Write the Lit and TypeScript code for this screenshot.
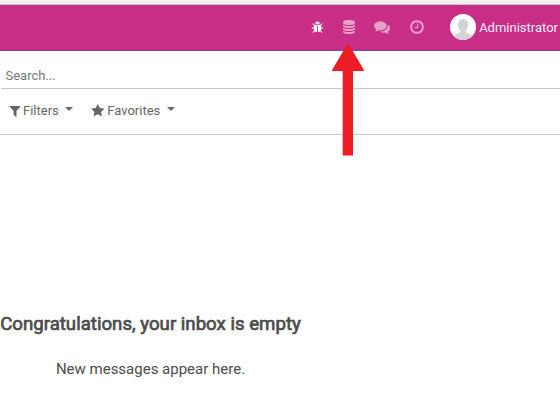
import { LitElement, html, css, svg } from "lit";
import { customElement } from "lit/decorators.js";

const paths = {
  bug: "M1696 960q0 26-19 45t-45 19h-224q0 171-67 290l208 209q19 19 19 45t-19 45q-18 19-45 19t-45-19l-198-197q-5 5-15 13t-42 28.5-65 36.5-82 29-97 13v-896h-128v896q-51 0-101.5-13.5t-87-33-66-39-43.5-32.5l-15-14-183 207q-20 21-48 21-24 0-43-16-19-18-20.5-44.5t15.5-46.5l202-227q-58-114-58-274h-224q-26 0-45-19t-19-45 19-45 45-19h224v-294l-173-173q-19-19-19-45t19-45 45-19 45 19l173 173h844l173-173q19-19 45-19t45 19 19 45-19 45l-173 173v294h224q26 0 45 19t19 45zm-480-576h-640q0-133 93.5-226.5t226.5-93.5 226.5 93.5 93.5 226.5z",
  database: "M896 768q237 0 443-43t325-127v170q0 69-103 128t-280 93.5-385 34.5-385-34.5-280-93.5-103-128v-170q119 84 325 127t443 43zm0 768q237 0 443-43t325-127v170q0 69-103 128t-280 93.5-385 34.5-385-34.5-280-93.5-103-128v-170q119 84 325 127t443 43zm0-384q237 0 443-43t325-127v170q0 69-103 128t-280 93.5-385 34.5-385-34.5-280-93.5-103-128v-170q119 84 325 127t443 43zm0-1152q208 0 385 34.5t280 93.5 103 128v128q0 69-103 128t-280 93.5-385 34.5-385-34.5-280-93.5-103-128v-128q0-69 103-128t280-93.5 385-34.5z",
  comments: "M1408 768q0 139-94 257t-256.5 186.5-353.5 68.5q-86 0-176-16-124 88-278 128-36 9-86 16h-3q-11 0-20.5-8t-11.5-21q-1-3-1-6.5t.5-6.5 2-6l2.5-5 3.5-5.5 4-5 4.5-5 4-4.5q5-6 23-25t26-29.5 22.5-29 25-38.5 20.5-44q-124-72-195-177t-71-224q0-139 94-257t256.5-186.5 353.5-68.5 353.5 68.5 256.5 186.5 94 257zm384 256q0 120-71 224.5t-195 176.5q10 24 20.5 44t25 38.5 22.5 29 26 29.5 23 25q1 1 4 4.5t4.5 5 4 5 3.5 5.5l2.5 5 2 6 .5 6.500-1 6.500q-3 14-13 22t-22 7q-50-7-86-16-154-40-278-128-90 16-176 16-271 0-472-132 58 4 88 4 161 0 309-45t264-129q125-92 192-212t67-254q0-77-23-152 129 71 204 178t75 230z",
  clock: "M1024 544v448q0 14-9 23t-23 9h-320q-14 0-23-9t-9-23v-64q0-14 9-23t23-9h224v-352q0-14 9-23t23-9h64q14 0 23 9t9 23zm416 352q0-148-73-273t-198-198-273-73-273 73-198 198-73 273 73 273 198 198 273 73 273-73 198-198 73-273zm224 0q0 209-103 385.5t-279.5 279.5-385.5 103-385.5-103-279.5-279.5-103-385.5 103-385.5 279.5-279.5 385.5-103 385.5 103 279.5 279.5 103 385.5z",
  filter: "M1595 295q17 41-14 70l-493 493v742q0 42-39 59-13 5-25 5-27 0-45-19l-256-256q-19-19-19-45v-486l-493-493q-31-29-14-70 17-39 59-39h1280q42 0 59 39z",
  star: "M1728 647q0 22-26 48l-363 354 86 500q1 7 1 20 0 21-10.5 35.5t-30.5 14.5q-19 0-40-12l-449-236-449 236q-22 12-40 12-21 0-31.5-14.5t-10.5-35.5q0-6 2-20l86-500-364-354q-25-27-25-48 0-37 56-46l502-73 225-455q19-41 49-41t49 41l225 455 502 73q56 9 56 46z",
};

const icon = (name: keyof typeof paths) =>
  html`<svg class="icon ${name}" viewBox="0 0 1792 1792">${svg`<path d=${paths[name]} />`}</svg>`;

@customElement("app-root")
export class AppRoot extends LitElement {
  static styles = css`
    :host {
      display: block;
      position: relative;
      height: 401px;
      overflow: hidden;
      background: #fff;
      color: #4c4c4c;
      font-family: Roboto, "Liberation Sans", sans-serif;
      font-size: 13px;
    }
    .icon { display: block; flex: none; fill: currentColor; overflow: visible; }
    .chrome { box-sizing: border-box; height: 5px; background: #f2f1ef; border-bottom: 1px solid #c9c5c2; }
    .navbar {
      box-sizing: border-box;
      height: 46px;
      padding: 0 2px 1px 0;
      display: flex;
      align-items: center;
      justify-content: flex-end;
      background: #c92e87;
      border-bottom: 1px solid #7145a0;
      color: #e9a0cb;
    }
    .bug { width: 13px; height: 13px; margin-right: 18.5px; color: #fff; }
    .database { width: 14px; height: 14px; margin-right: 18px; }
    .comments { width: 16px; height: 16px; margin-right: 19px; }
    .clock { width: 16px; height: 16px; margin-right: 25px; }
    .avatar { display: block; flex: none; width: 26px; height: 26px; margin-right: 3px; }
    .user { color: #fbe9f4; white-space: nowrap; }
    .search {
      box-sizing: border-box;
      height: 38px;
      margin-left: 1px;
      padding: 12px 0 0 4.5px;
      border-bottom: 1px solid #c6c6c6;
      line-height: 26px;
      color: #777;
    }
    .options {
      box-sizing: border-box;
      height: 46px;
      padding: 0 0 2px 8px;
      display: flex;
      align-items: center;
      border-bottom: 1px solid #c6c6c6;
      color: #666;
    }
    .option { display: flex; align-items: center; margin-right: 18px; }
    .filter { width: 14px; height: 14px; margin-right: 1px; }
    .star { width: 13.5px; height: 13.5px; margin-right: 2.5px; }
    .caret { border: 4px solid transparent; border-top-color: currentColor; border-bottom: 0; margin: -3px 0 0 6.5px; }
    .empty { display: flex; flex-direction: column; width: 301px; padding-top: 177px; align-items: center; white-space: nowrap; }
    .title { margin: 0; font-size: 18.65px; line-height: 24px; font-weight: 400; -webkit-text-stroke: 0.7px currentColor; }
    .hint { margin: 22px 0 0; font-size: 15px; line-height: 22px; }
    .pointer { position: absolute; left: 331px; top: 42px; width: 34px; height: 115px; fill: #ee1c25; }
  `;

  render() {
    return html`
      <div class="chrome"></div>
      <nav class="navbar">
        ${icon("bug")}${icon("database")}${icon("comments")}${icon("clock")}
        <svg class="avatar" viewBox="0 0 26 26">
          <circle cx="13" cy="13" r="13" fill="#fff" />
          <path fill="#d3d3d3" d="M13 5c3.200 0 5.200 2.300 5.200 5.800 0 2.600-1 4.700-2.400 5.900v1.600c1.200 1.200 4.300 1.500 6.200 4A13 13 0 0 1 13 26a13 13 0 0 1-9-3.700c1.900-2.500 5-2.800 6.200-4v-1.600C8.800 15.500 7.800 13.400 7.800 10.800 7.800 7.300 9.800 5 13 5z" />
        </svg>
        <span class="user">Administrator</span>
      </nav>
      <div class="search">Search...</div>
      <div class="options">
        <div class="option">${icon("filter")}<span>Filters</span><i class="caret"></i></div>
        <div class="option">${icon("star")}<span>Favorites</span><i class="caret"></i></div>
      </div>
      <main class="empty">
        <h1 class="title">Congratulations, your inbox is empty</h1>
        <p class="hint">New messages appear here.</p>
      </main>
      <svg class="pointer" viewBox="0 0 34 115">
        <path d="M17 1L33.500 29H22V113.500H11.700V29H.500z" />
      </svg>
    `;
  }
}
